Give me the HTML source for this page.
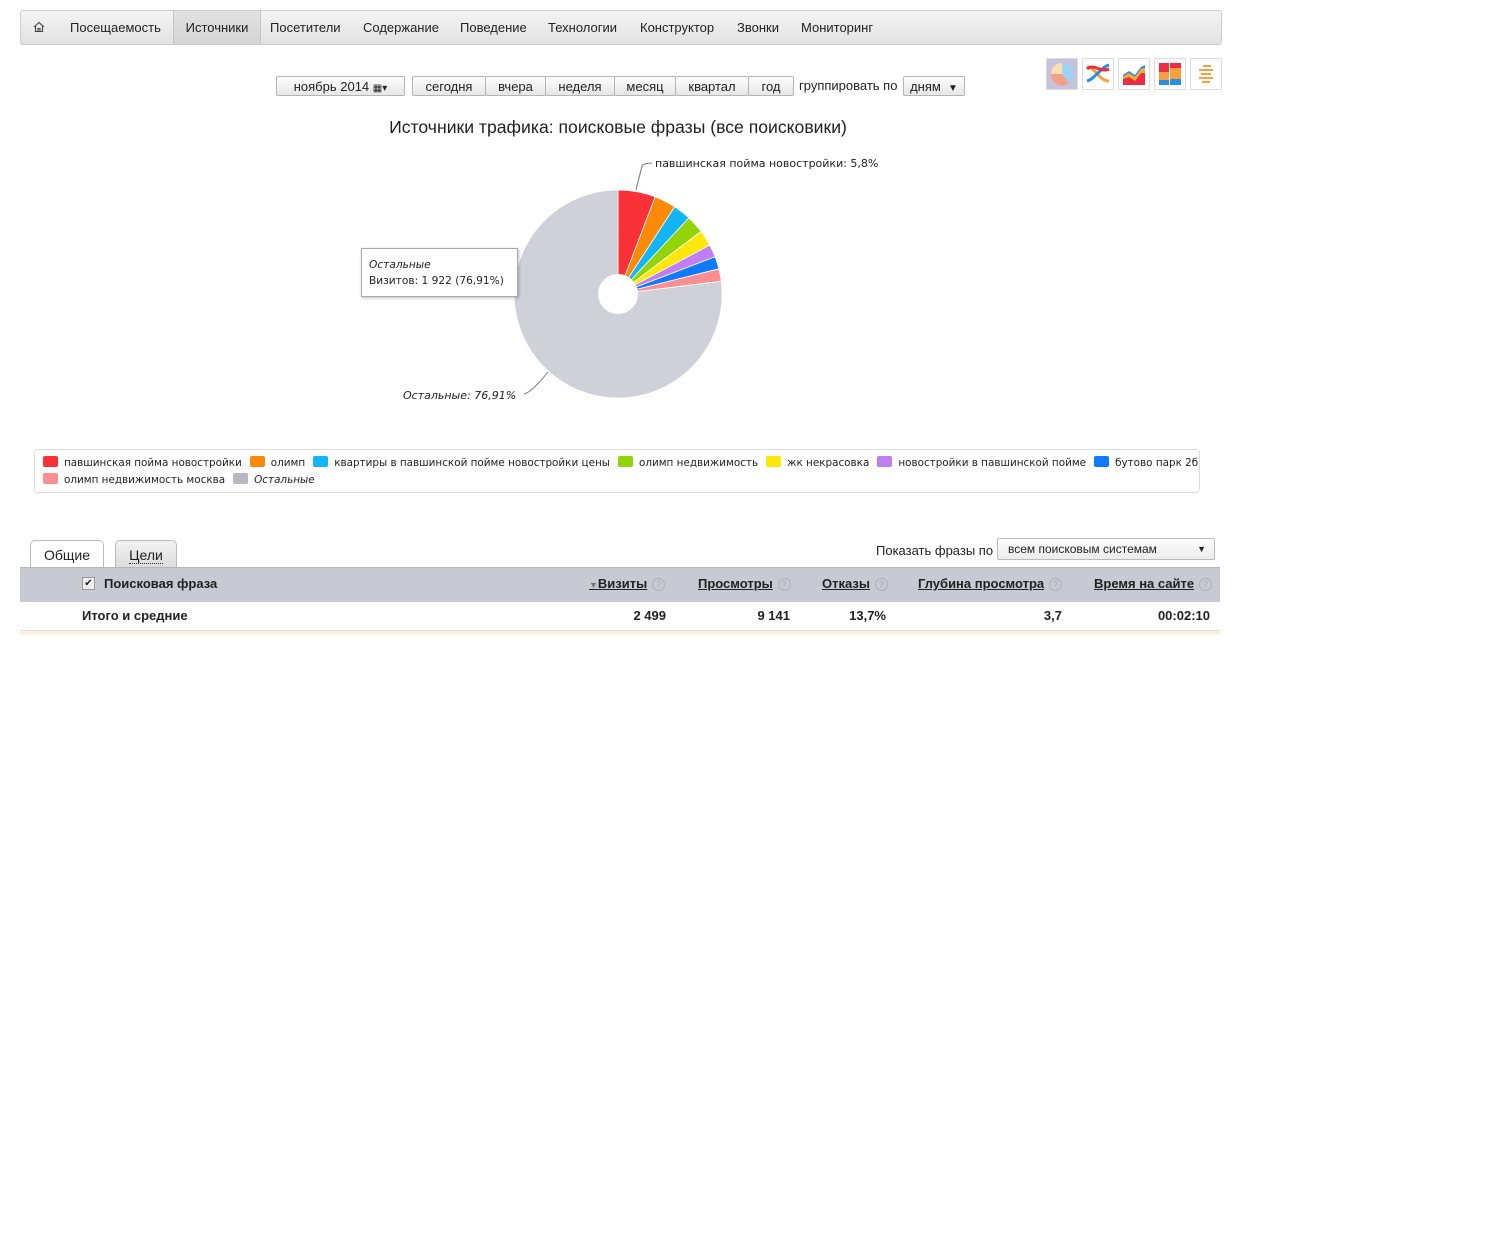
<!DOCTYPE html>
<html><head><meta charset="utf-8">
<style>
body{margin:0;background:#fff;font-family:"Liberation Sans",Arial,sans-serif;font-size:13px;color:#222;width:1498px;height:1258px;position:relative;overflow:hidden}
.abs{position:absolute}
.nav{left:20px;top:10px;width:1200px;height:33px;border:1px solid #ccc;border-radius:3px;background:linear-gradient(#f4f4f4,#e2e2e2)}
.nav span{position:absolute;top:0;height:33px;line-height:33px;font-size:13px;color:#222}
.btn{position:absolute;top:76px;height:20px;line-height:20px;border:1px solid #b5b5b5;background:linear-gradient(#fdfdfd,#e6e6e6);font-size:13px;text-align:center;color:#222;box-sizing:border-box;border-radius:2px}
.dv{font-family:"DejaVu Sans",Verdana,sans-serif;font-size:10.4px}
.sw{display:inline-block;width:15px;height:11px;border-radius:2px;vertical-align:-1px;margin-right:6px}
.leg span.it{margin-right:8px}
.th{position:absolute;top:576px;font-weight:bold;text-decoration:underline;font-size:13px}
.q{display:inline-block;width:11px;height:11px;border:1px solid #b0b0b8;border-radius:50%;font-size:8px;line-height:11px;text-align:center;color:#aaa;font-weight:normal;text-decoration:none;margin-left:5px;vertical-align:1px}
.td{position:absolute;top:608px;font-weight:bold;font-size:13px}
</style></head><body>

<div class="abs nav">
 <span style="left:12px"><svg width="12" height="12" viewBox="0 0 12 12" style="vertical-align:-1px"><path d="M1 6 L6 1.5 L11 6 M2.5 5 V10.5 H9.5 V5 M5 10.5 V7.5 H7 V10.5" fill="none" stroke="#444" stroke-width="1.1"/></svg></span>
 <span style="left:49px">Посещаемость</span>
 <span style="left:152px;width:86px;background:linear-gradient(#e2e2e2,#d4d4d4);border-left:1px solid #c6c6c6;border-right:1px solid #c6c6c6;text-align:center">Источники</span>
 <span style="left:249px">Посетители</span>
 <span style="left:342px">Содержание</span>
 <span style="left:439px">Поведение</span>
 <span style="left:527px">Технологии</span>
 <span style="left:619px">Конструктор</span>
 <span style="left:716px">Звонки</span>
 <span style="left:780px">Мониторинг</span>
</div>

<div class="btn" style="left:276px;width:129px">ноябрь 2014 <span style="font-size:10px">▦▾</span></div>
<div class="btn" style="left:412px;width:74px">сегодня</div>
<div class="btn" style="left:485px;width:61px">вчера</div>
<div class="btn" style="left:545px;width:70px">неделя</div>
<div class="btn" style="left:614px;width:62px">месяц</div>
<div class="btn" style="left:675px;width:74px">квартал</div>
<div class="btn" style="left:748px;width:46px">год</div>
<div class="abs" style="left:799px;top:78px">группировать по</div>
<div class="btn" style="left:903px;width:62px">дням &nbsp;<span style="font-size:10px">▼</span></div>

<div class="abs" style="left:1046px;top:58px;width:32px;height:32px;background:#c8c3dc;border:1px solid #ddd;box-sizing:border-box">
<svg width="30" height="30" viewBox="0 0 30 30"><circle cx="15" cy="15" r="11" fill="#ffe0b0"/><path d="M15 15 L15 4 A11 11 0 0 1 22 24 Z" fill="#9fd3f5"/><path d="M15 15 L22 24 A11 11 0 0 1 4 15 Z" fill="#f6a08a"/></svg></div>
<div class="abs" style="left:1082px;top:58px;width:32px;height:32px;border:1px solid #ddd;box-sizing:border-box">
<svg width="30" height="30" viewBox="0 0 30 30"><path d="M4 8 C12 8 16 22 26 22" stroke="#f7a040" stroke-width="3" fill="none"/><path d="M4 22 C12 20 18 8 26 6" stroke="#2a8ee0" stroke-width="3" fill="none"/><path d="M4 10 C10 4 18 14 26 10" stroke="#e8303a" stroke-width="3" fill="none"/></svg></div>
<div class="abs" style="left:1118px;top:58px;width:32px;height:32px;border:1px solid #ddd;box-sizing:border-box">
<svg width="30" height="30" viewBox="0 0 30 30"><path d="M4 26 V16 L10 12 L16 16 L22 8 L26 6 V26 Z" fill="#2a8ee0"/><path d="M4 26 V18 L10 14 L16 18 L22 10 L26 9 V26 Z" fill="#f7b030"/><path d="M4 26 V20 L10 18 L16 22 L22 14 L26 14 V26 Z" fill="#ee2c44"/></svg></div>
<div class="abs" style="left:1154px;top:58px;width:32px;height:32px;border:1px solid #ddd;box-sizing:border-box">
<svg width="30" height="30" viewBox="0 0 30 30"><rect x="4" y="4" width="10" height="9" fill="#ee2c44"/><rect x="4" y="13" width="10" height="8" fill="#f7a040"/><rect x="4" y="21" width="10" height="5" fill="#2a8ee0"/><rect x="15" y="4" width="11" height="5" fill="#ee2c44"/><rect x="15" y="9" width="11" height="11" fill="#f7a040"/><rect x="15" y="20" width="11" height="6" fill="#2a8ee0"/></svg></div>
<div class="abs" style="left:1190px;top:58px;width:32px;height:32px;border:1px solid #ddd;box-sizing:border-box">
<svg width="30" height="30" viewBox="0 0 30 30" stroke="#f7a040" stroke-width="2"><path d="M12 7h8M8 11h12M14 11h8M10 15h10M12 19h10M8 19h6M11 23h8"/></svg></div>

<div class="abs" style="left:0;width:1236px;top:117px;text-align:center;font-size:17.6px;color:#222">Источники трафика: поисковые фразы (все поисковики)</div>

<svg class="abs" style="left:0;top:0" width="1000" height="440">
<g stroke="#fff" stroke-width="0.8">
<path d="M618 294 L618 190 A104 104 0 0 1 655.2 196.9 Z" fill="#f83236"/>
<path d="M618 294 L655.2 196.9 A104 104 0 0 1 674.7 206.8 Z" fill="#fb8a06"/>
<path d="M618 294 L674.7 206.8 A104 104 0 0 1 688.9 217.9 Z" fill="#12b6f4"/>
<path d="M618 294 L688.9 217.9 A104 104 0 0 1 701.1 231.4 Z" fill="#91d40a"/>
<path d="M618 294 L701.1 231.4 A104 104 0 0 1 709.8 245.2 Z" fill="#ffe70c"/>
<path d="M618 294 L709.8 245.2 A104 104 0 0 1 715.1 256.8 Z" fill="#c17ef0"/>
<path d="M618 294 L715.1 256.8 A104 104 0 0 1 718.9 268.8 Z" fill="#0f7afc"/>
<path d="M618 294 L718.9 268.8 A104 104 0 0 1 721.3 281.3 Z" fill="#fb8e90"/>
<path d="M618 294 L721.3 281.3 A104 104 0 1 1 618 190 Z" fill="#d0d0d8"/>
</g>
<circle cx="618" cy="294" r="20" fill="#fff"/>
<path d="M636 190 L642 166 Q644 163 652 163" stroke="#777" fill="none"/>
<path d="M548 372 Q532 392 524 394" stroke="#777" fill="none"/>
<text x="655" y="167" font-family="DejaVu Sans,sans-serif" font-size="11" fill="#222">павшинская пойма новостройки: 5,8%</text>
<text x="403" y="399" font-family="DejaVu Sans,sans-serif" font-size="11" font-style="italic" fill="#222">Остальные: 76,91%</text>
</svg>

<div class="abs dv" style="left:361px;top:248px;width:157px;height:49px;box-sizing:border-box;border:1px solid #aaa;background:#fff;box-shadow:1px 1px 3px rgba(0,0,0,.25);padding:8px 0 0 7px;line-height:16px;font-size:10.6px">
<i>Остальные</i><br>Визитов: 1 922 (76,91%)</div>

<div class="abs dv leg" style="left:34px;top:449px;width:1166px;height:44px;box-sizing:border-box;border:1px solid #ddd;border-radius:4px;padding:5px 0 0 8px;line-height:17px;color:#222;white-space:nowrap">
<span class="it"><span class="sw" style="background:#f83236"></span>павшинская пойма новостройки</span><span class="it"><span class="sw" style="background:#fb8a06"></span>олимп</span><span class="it"><span class="sw" style="background:#12b6f4"></span>квартиры в павшинской пойме новостройки цены</span><span class="it"><span class="sw" style="background:#91d40a"></span>олимп недвижимость</span><span class="it"><span class="sw" style="background:#ffe70c"></span>жк некрасовка</span><span class="it"><span class="sw" style="background:#c17ef0"></span>новостройки в павшинской пойме</span><span class="it"><span class="sw" style="background:#0f7afc"></span>бутово парк 2б</span><br>
<span class="it"><span class="sw" style="background:#fb8e90"></span>олимп недвижимость москва</span><span class="it"><span class="sw" style="background:#b8b8c2"></span><i>Остальные</i></span>
</div>

<div class="abs" style="left:30px;top:540px;width:74px;height:28px;box-sizing:border-box;border:1px solid #bbb;border-bottom:none;border-radius:5px 5px 0 0;background:#fff;text-align:center;line-height:28px;font-size:14px">Общие</div>
<div class="abs" style="left:115px;top:540px;width:62px;height:27px;box-sizing:border-box;border:1px solid #bbb;border-bottom:none;border-radius:5px 5px 0 0;background:linear-gradient(#f2f2f2,#ddd);text-align:center;line-height:28px;font-size:14px"><span style="border-bottom:1px dotted #333">Цели</span></div>
<div class="abs" style="left:876px;top:543px">Показать фразы по</div>
<div class="abs" style="left:997px;top:538px;width:218px;height:22px;box-sizing:border-box;border:1px solid #bbb;border-radius:2px;background:linear-gradient(#fdfdfd,#ececec);font-size:12px;line-height:20px;padding-left:10px">всем поисковым системам<span style="position:absolute;right:8px;font-size:9px">▼</span></div>

<div class="abs" style="left:20px;top:567px;width:1200px;height:34px;background:#c8c9d2;border-top:1px solid #b5b5bd"></div>
<div class="abs" style="left:82px;top:577px;width:11px;height:11px;border:1px solid #999;background:#eee;font-size:10px;line-height:11px;text-align:center">✔</div>
<div class="abs" style="left:104px;top:576px;font-weight:bold">Поисковая фраза</div>
<div class="th" style="left:589px"><span style="font-size:9px;color:#777;text-decoration:none;font-weight:normal">▼</span>Визиты<span class="q">?</span></div>
<div class="th" style="left:698px">Просмотры<span class="q">?</span></div>
<div class="th" style="left:822px">Отказы<span class="q">?</span></div>
<div class="th" style="left:918px">Глубина просмотра<span class="q">?</span></div>
<div class="th" style="left:1094px">Время на сайте<span class="q">?</span></div>

<div class="td" style="left:82px">Итого и средние</div>
<div class="td" style="left:600px;width:66px;text-align:right">2 499</div>
<div class="td" style="left:700px;width:90px;text-align:right">9 141</div>
<div class="td" style="left:800px;width:86px;text-align:right">13,7%</div>
<div class="td" style="left:960px;width:102px;text-align:right">3,7</div>
<div class="td" style="left:1100px;width:110px;text-align:right">00:02:10</div>
<div class="abs" style="left:20px;top:630px;width:1200px;height:1px;background:#ddd"></div>
<div class="abs" style="left:20px;top:631px;width:1200px;height:4px;background:#fdf1e4"></div>
</body></html>
